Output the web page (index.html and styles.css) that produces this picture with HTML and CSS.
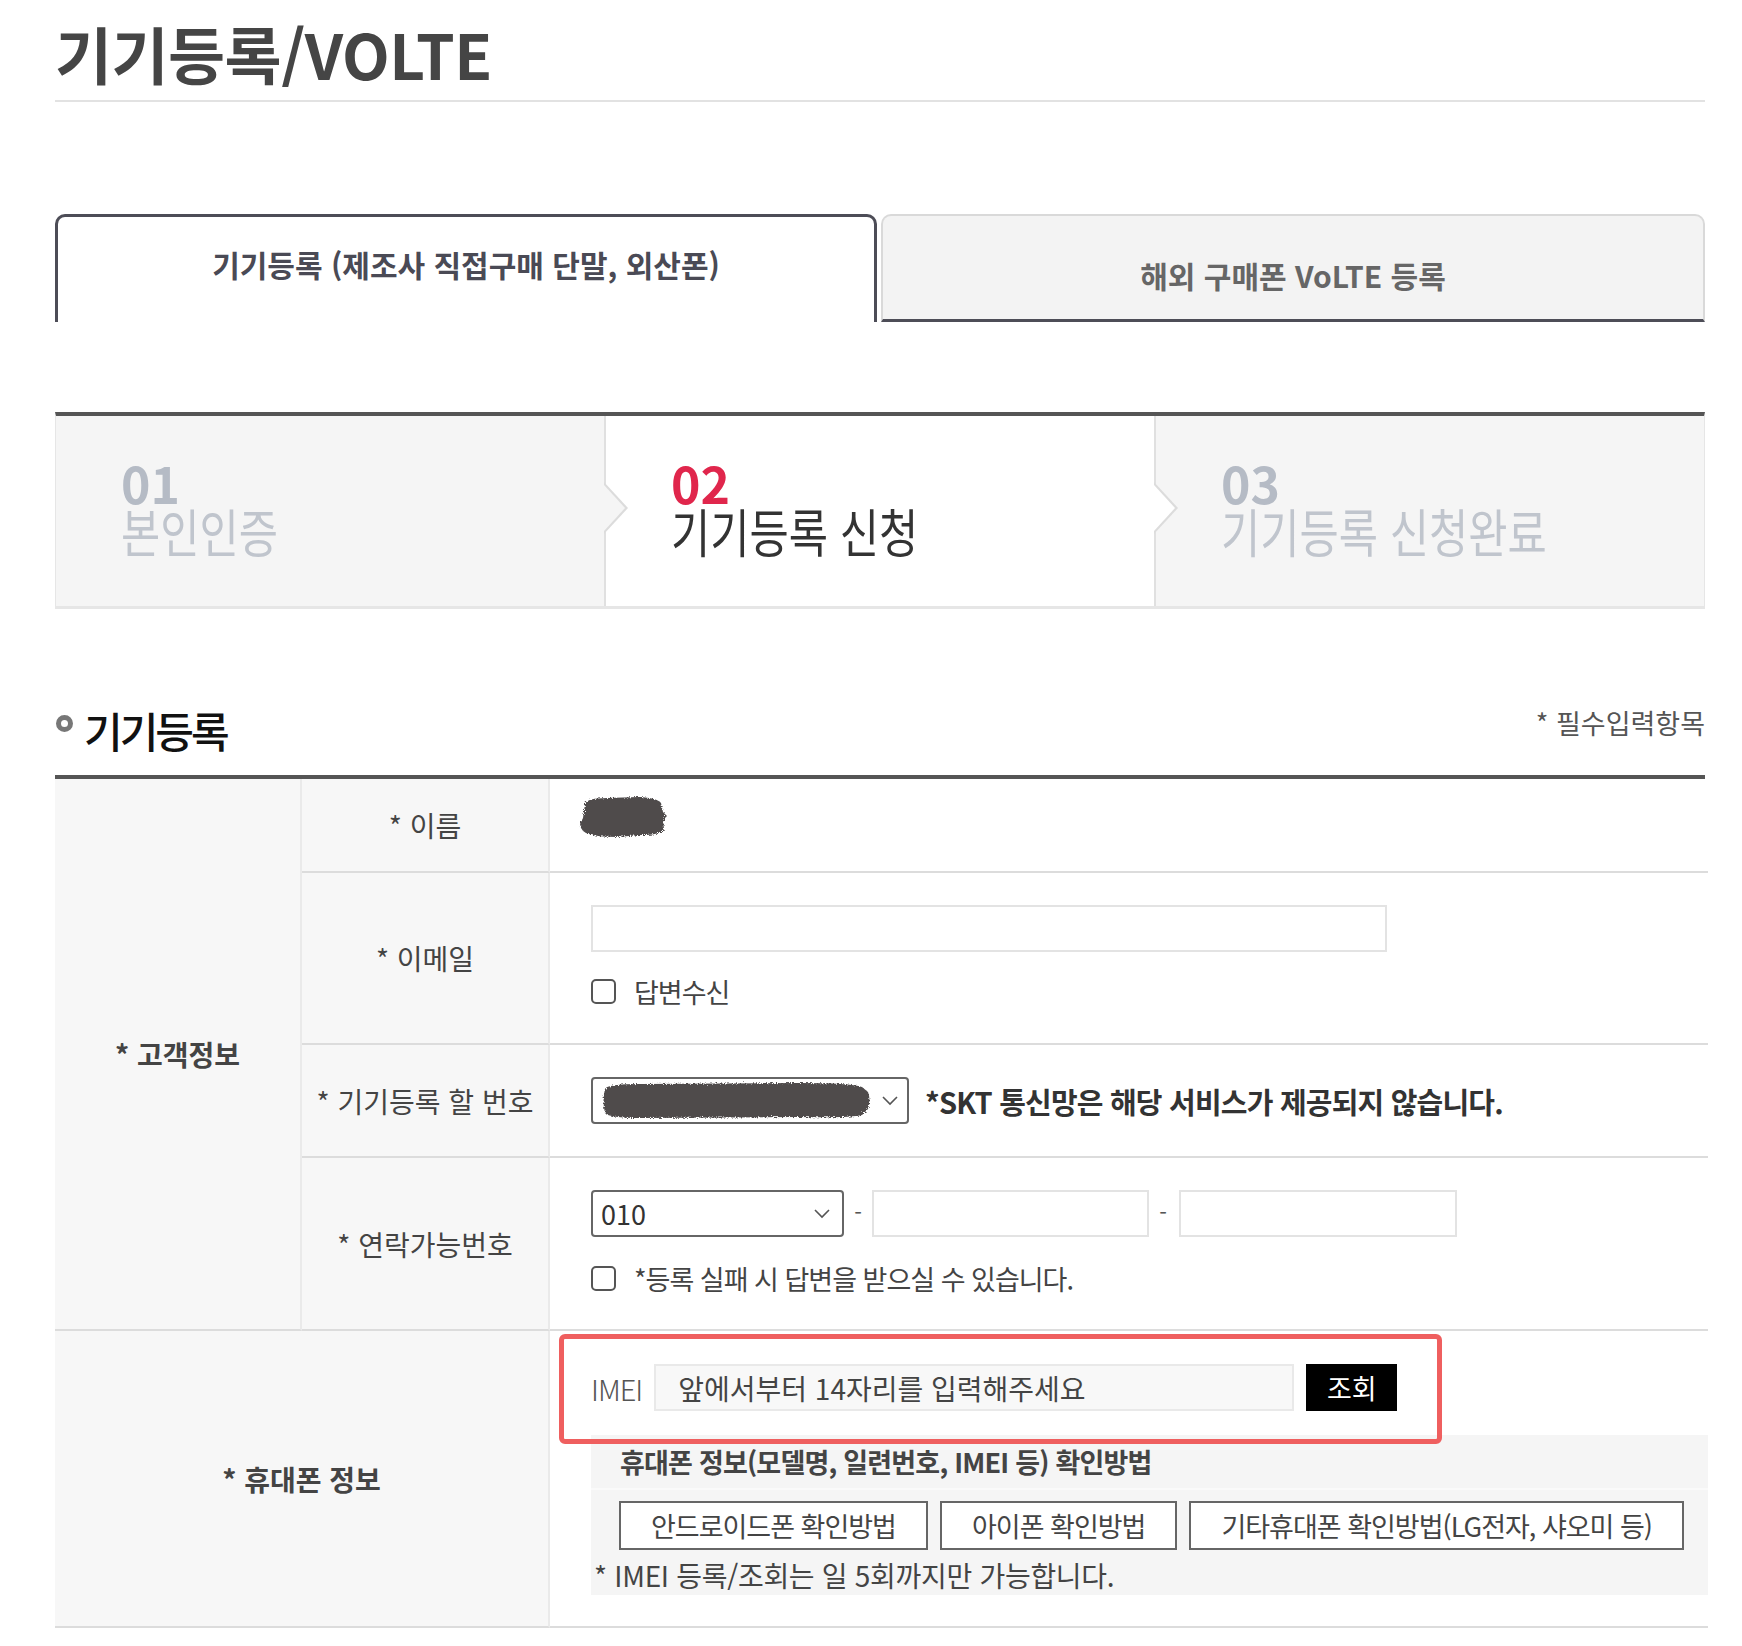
FILE: index.html
```html
<!DOCTYPE html>
<html lang="ko">
  <head>
    <meta charset="UTF-8" />
    <title>기기등록/VOLTE</title>
    <link rel="stylesheet" href="styles.css">
  </head>
  <body>
    <!-- shared filter for the scribbled-out values -->
    <svg class="defs" width="0" height="0" aria-hidden="true">
      <filter id="rough" x="-10%" y="-10%" width="120%" height="120%">
        <feTurbulence type="fractalNoise" baseFrequency="0.8" numOctaves="2" result="noise" />
        <feDisplacementMap in="SourceGraphic" in2="noise" scale="5" />
      </filter>
    </svg>

    <div class="page">
      <h1 class="page-title">기기등록/VOLTE</h1>

      <!-- Tabs -->
      <div class="tabs">
        <a class="tab tab-on">기기등록 (제조사 직접구매 단말, 외산폰)</a>
        <a class="tab tab-off">해외 구매폰 VoLTE 등록</a>
      </div>

      <!-- Steps -->
      <ol class="steps">
        <li class="step">
          <span class="step-num">01</span>
          <span class="step-name">본인인증</span>
        </li>
        <li class="step step-on">
          <span class="step-num">02</span>
          <span class="step-name">기기등록 신청</span>
        </li>
        <li class="step">
          <span class="step-num">03</span>
          <span class="step-name">기기등록 신청완료</span>
        </li>
      </ol>

      <div class="sec-head">
        <h2 class="sec-title"><span class="bullet"></span>기기등록</h2>
        <p class="req-note">* 필수입력항목</p>
      </div>

      <!-- Form -->
      <div class="form-grid">
        <div class="th th-group">* 고객정보</div>

        <div class="th">* 이름</div>
        <div class="td td-name">
          <svg class="scribble scribble-name" viewBox="0 0 92 46" preserveAspectRatio="none">
            <path d="M8 10 Q10 4 30 4 L62 3 Q80 4 84 9 L86 18 L90 22 L86 26 L87 35 Q84 41 64 41 L40 43 Q20 43 12 40 Q4 38 3 30 L6 24 Z" />
          </svg>
        </div>

        <div class="th">* 이메일</div>
        <div class="td td-email">
          <input class="input input-email" type="text" />
          <label class="check"><span class="box"></span>답변수신</label>
        </div>

        <div class="th">* 기기등록 할 번호</div>
        <div class="td td-device">
          <div class="select select-device">
            <svg class="scribble scribble-device" viewBox="0 0 273 41" preserveAspectRatio="none">
              <path d="M5 9 Q7 4 40 4 L200 3 Q250 3 262 7 L268 12 Q271 20 268 29 L262 35 Q250 38 200 37 L40 38 Q9 38 5 33 Q2 21 5 9 Z" />
            </svg>
            <svg class="chevron" viewBox="0 0 16 10"><polyline points="1,1 8,8 15,1" /></svg>
          </div>
          <strong class="warn">*SKT 통신망은 해당 서비스가 제공되지 않습니다.</strong>
        </div>

        <div class="th">* 연락가능번호</div>
        <div class="td td-phone">
          <div class="phone-row">
            <div class="select select-prefix">
              <span>010</span>
              <svg class="chevron" viewBox="0 0 16 10"><polyline points="1,1 8,8 15,1" /></svg>
            </div>
            <span class="dash">-</span>
            <input class="input input-mid" type="text" />
            <span class="dash">-</span>
            <input class="input input-last" type="text" />
          </div>
          <label class="check"><span class="box"></span>*등록 실패 시 답변을 받으실 수 있습니다.</label>
        </div>

        <div class="th th-wide">* 휴대폰 정보</div>
        <div class="td td-imei">
          <div class="imei-row">
            <span class="imei-label">IMEI</span>
            <input class="input input-imei" type="text" placeholder="앞에서부터 14자리를 입력해주세요" />
            <button class="btn-search">조회</button>
          </div>

          <div class="info-box">
            <p class="info-head">휴대폰 정보(모델명, 일련번호, IMEI 등) 확인방법</p>
            <div class="info-btns">
              <button class="btn-line">안드로이드폰 확인방법</button>
              <button class="btn-line">아이폰 확인방법</button>
              <button class="btn-line">기타휴대폰 확인방법(LG전자, 샤오미 등)</button>
            </div>
            <p class="info-note">* IMEI 등록/조회는 일 5회까지만 가능합니다.</p>
          </div>

          <!-- red highlight drawn over the IMEI field -->
          <div class="highlight"></div>
        </div>
      </div>
    </div>
  </body>
</html>
```

FILE: styles.css
```css
body {
  margin: 0;
  background: #fff;
  font-family: "Noto Sans CJK KR", "Noto Sans", sans-serif;
  color: #444;
}
.defs {
  position: absolute;
}
.page {
  width: 1650px;
  margin-left: 55px;
  padding-top: 22px;
}
.page-title {
  margin: 0;
  padding-bottom: 16px;
  border-bottom: 2px solid #e2e2e2;
  font-size: 62px;
  line-height: 62px;
  font-weight: 700;
  color: #454545;
  letter-spacing: -0.5px;
}

/* tabs */
.tabs {
  display: flex;
  margin-top: 112px;
  height: 108px;
}
.tab {
  display: block;
  box-sizing: border-box;
  height: 108px;
  text-align: center;
  font-size: 30px;
  line-height: 40px;
  font-weight: 700;
  border-radius: 10px 10px 0 0;
  cursor: pointer;
}
.tab-on {
  width: 822px;
  padding-top: 27px;
  border: 3px solid #4d4d57;
  border-bottom: 0;
  color: #4a4a55;
}
.tab-off {
  flex: 1;
  margin-left: 4px;
  padding-top: 39px;
  background: #f3f3f3;
  border: 2px solid #d9d9d9;
  border-bottom: 3px solid #4d4d57;
  color: #666;
}

/* steps */
.steps {
  display: flex;
  margin: 90px 0 0;
  padding: 0;
  list-style: none;
  border-top: 4px solid #555;
  border-bottom: 3px solid #e6e6e6;
  border-left: 1px solid #e6e6e6;
  border-right: 1px solid #e6e6e6;
}
.step {
  position: relative;
  flex: 1;
  height: 190px;
  box-sizing: border-box;
  padding: 41px 0 0 65px;
  background: #f5f5f5;
}
.step + .step {
  border-left: 2px solid #e0e0e0;
}
.step-on {
  background: #fff;
}
.step:not(:last-child)::before,
.step:not(:last-child)::after {
  content: "";
  position: absolute;
  left: 100%;
  clip-path: polygon(0 0, 100% 50%, 0 100%);
  z-index: 2;
}
.step:not(:last-child)::before {
  top: 66px;
  width: 24px;
  height: 52px;
  background: #dcdcdc;
}
.step:not(:last-child)::after {
  top: 69px;
  width: 21px;
  height: 46px;
  background: #f5f5f5;
  z-index: 3;
}
.step-on:not(:last-child)::after {
  background: #fff;
}
.step-num {
  display: block;
  font-size: 50px;
  line-height: 50px;
  font-weight: 700;
  color: #b5bbc5;
}
.step-name {
  display: block;
  font-size: 52px;
  line-height: 48px;
  color: #c0c5cd;
  white-space: nowrap;
  transform: scaleX(0.82);
  transform-origin: left center;
}
.step-on .step-num {
  color: #e0264c;
}
.step-on .step-name {
  color: #333;
}

/* section head */
.sec-head {
  display: flex;
  justify-content: space-between;
  align-items: flex-start;
  margin-top: 99px;
  margin-bottom: 23px;
}
.sec-title {
  display: flex;
  align-items: flex-start;
  margin: 0;
  font-size: 42px;
  line-height: 44px;
  font-weight: 500;
  letter-spacing: -3px;
  color: #111;
}
.bullet {
  width: 17px;
  height: 17px;
  box-sizing: border-box;
  margin: 7px 11px 0 1px;
  border: 5px solid #777;
  border-radius: 50%;
}
.req-note {
  margin: 0;
  font-size: 27px;
  line-height: 30px;
  color: #555;
}

/* form grid */
.form-grid {
  display: grid;
  grid-template-columns: 247px 248px 1fr;
  grid-template-rows: 94px 172px 113px 173px 297px;
  border-top: 4px solid #555;
}
.th,
.td {
  box-sizing: border-box;
  border-bottom: 2px solid #dcdcdc;
}
.th {
  display: flex;
  align-items: center;
  justify-content: center;
  background: #f7f7f7;
  border-right: 2px solid #eaeaea;
  font-size: 28px;
  color: #444;
}
.th-group {
  grid-row: span 4;
  font-weight: 700;
}
.th-wide {
  grid-column: 1 / span 2;
  font-weight: 700;
}
.td {
  padding-left: 41px;
  font-size: 27px;
  color: #444;
}

.scribble path {
  fill: #4f4b4c;
  filter: url(#rough);
}
.td-name {
  display: flex;
  align-items: center;
  padding-left: 27px;
}
.scribble-name {
  width: 92px;
  height: 46px;
  margin-bottom: 16px;
}

.input {
  display: block;
  box-sizing: border-box;
  height: 47px;
  margin: 0;
  padding: 0 10px;
  border: 2px solid #e3e3e3;
  background: #fff;
  font-family: inherit;
  font-size: 28px;
  color: #444;
  outline: none;
}
.td-email {
  padding-top: 32px;
}
.input-email {
  width: 796px;
}
.check {
  display: flex;
  align-items: center;
  height: 25px;
  margin-top: 27px;
  font-size: 27px;
  letter-spacing: -1px;
  color: #444;
}
.box {
  width: 25px;
  height: 25px;
  box-sizing: border-box;
  margin-right: 18px;
  border: 2px solid #555;
  border-radius: 5px;
  background: #fff;
}

.select {
  display: flex;
  align-items: center;
  box-sizing: border-box;
  height: 47px;
  border: 2px solid #666;
  border-radius: 4px;
  background: #fff;
}
.chevron {
  width: 16px;
  height: 10px;
}
.chevron polyline {
  fill: none;
  stroke: #555;
  stroke-width: 1.6;
}
.td-device {
  display: flex;
  align-items: center;
}
.select-device {
  width: 318px;
  padding-left: 7px;
}
.scribble-device {
  width: 273px;
  height: 41px;
  margin-right: 9px;
}
.warn {
  margin-left: 16px;
  font-size: 29px;
  font-weight: 700;
  letter-spacing: -0.8px;
  color: #333;
}

.td-phone {
  padding-top: 32px;
}
.phone-row {
  display: flex;
  align-items: center;
}
.select-prefix {
  width: 253px;
  justify-content: space-between;
  padding: 0 12px 0 8px;
  font-size: 27px;
  color: #333;
}
.dash {
  width: 28px;
  text-align: center;
  font-size: 22px;
  color: #555;
  margin-top: -6px;
}
.input-mid {
  width: 277px;
}
.input-last {
  width: 278px;
  margin-left: 2px;
}
.td-phone .check {
  margin-top: 29px;
}

/* IMEI */
.td-imei {
  position: relative;
  padding-top: 33px;
}
.imei-row {
  display: flex;
  align-items: center;
}
.imei-label {
  font-size: 29px;
  font-weight: 300;
  color: #555;
  margin-right: 12px;
  letter-spacing: -1px;
}
.input-imei {
  width: 640px;
  padding-left: 22px;
  background: #f8f8f8;
  border-color: #e9e9e9;
}
.input-imei::placeholder {
  color: #444;
}
.btn-search {
  width: 91px;
  height: 47px;
  margin-left: 12px;
  border: 0;
  background: #000;
  color: #fff;
  font-family: inherit;
  font-size: 27px;
  cursor: pointer;
}
.info-box {
  width: 1117px;
  margin-top: 24px;
  background: #f5f5f5;
}
.info-head {
  margin: 0;
  padding-left: 29px;
  line-height: 53px;
  font-size: 27px;
  font-weight: 700;
  letter-spacing: -0.8px;
  border-bottom: 2px solid #fafafa;
}
.info-btns {
  display: flex;
  gap: 12px;
  padding: 11px 0 0 28px;
}
.btn-line {
  height: 49px;
  padding: 0 30px;
  border: 2px solid #666;
  background: #fff;
  font-family: inherit;
  font-size: 27px;
  letter-spacing: -1px;
  color: #444;
  cursor: pointer;
}
.info-note {
  margin: 7px 0 0;
  padding: 0 0 2px 3px;
  line-height: 36px;
  font-size: 28px;
  letter-spacing: -0.3px;
}
.highlight {
  position: absolute;
  left: 9px;
  top: 3px;
  width: 883px;
  height: 110px;
  box-sizing: border-box;
  border: 5px solid #ef5f5f;
  border-radius: 6px;
  pointer-events: none;
}
```
